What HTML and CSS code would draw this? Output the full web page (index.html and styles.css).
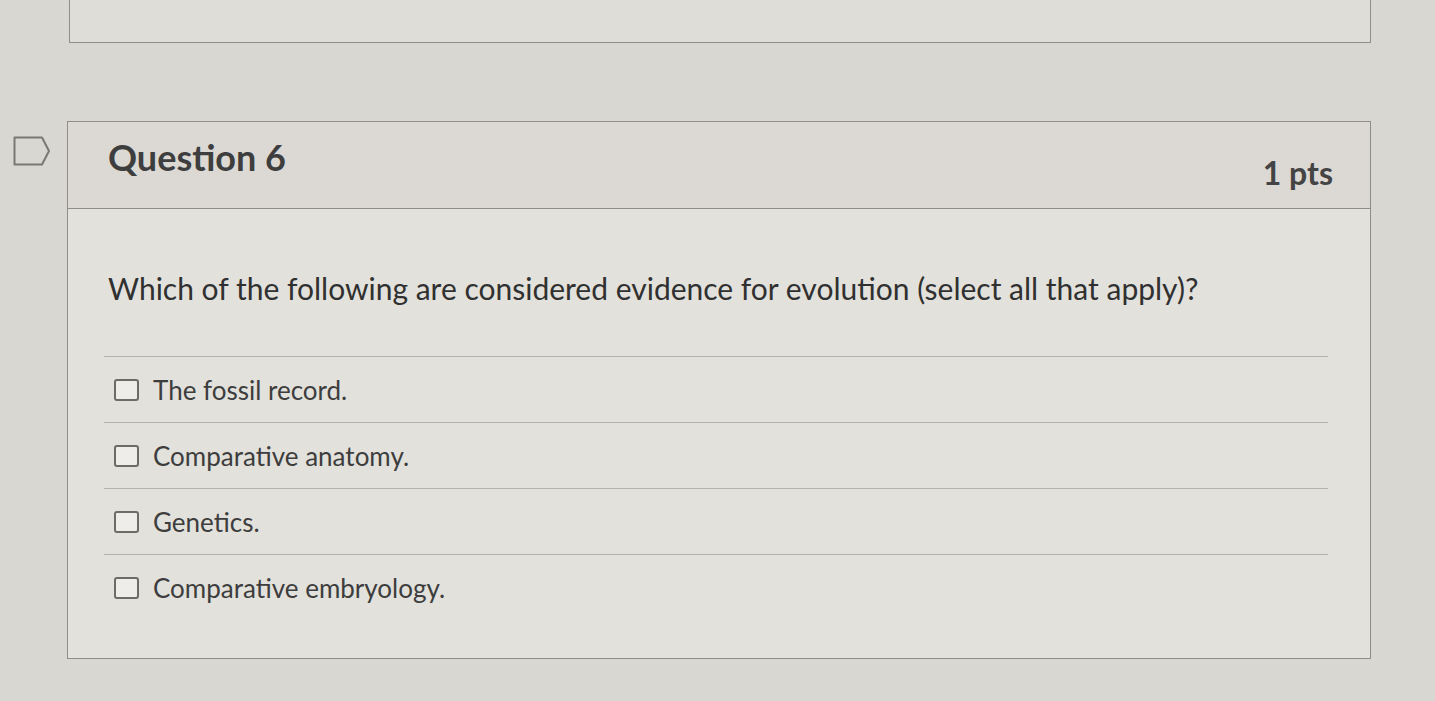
FILE: index.html
```html
<!DOCTYPE html>
<html lang="en">
<head>
<meta charset="utf-8">
<title>Question 6</title>
<link rel="stylesheet" href="styles.css">
</head>
<body>
<div class="page">
  <div class="prev-card"></div>
  <div class="question">
    <div class="flag-col">
      <svg class="flag" width="38" height="30" viewBox="0 0 38 30" aria-hidden="true">
        <path d="M1.5 1.5 H29 L36 15 L29 28.5 H1.5 Z" fill="none" stroke="#7a7874" stroke-width="2" stroke-linejoin="round"/>
      </svg>
    </div>
    <div class="card">
      <div class="card-header">
        <h2 class="title">Question 6</h2>
        <div class="pts">1 pts</div>
      </div>
      <div class="card-body">
        <p class="prompt">Which of the following are considered evidence for evolution (select all that apply)?</p>
        <div class="answers">
          <label class="answer"><span class="box"></span><span>The fossil record.</span></label>
          <label class="answer"><span class="box"></span><span>Comparative anatomy.</span></label>
          <label class="answer"><span class="box"></span><span>Genetics.</span></label>
          <label class="answer"><span class="box"></span><span>Comparative embryology.</span></label>
        </div>
      </div>
    </div>
  </div>
</div>
</body>
</html>
```

FILE: styles.css
```css
html, body {
  margin: 0;
  padding: 0;
}
body {
  background: #d9d7d2;
  font-family: Lato, "Open Sans", "Liberation Sans", sans-serif;
  color: #3b3b3b;
  width: 1435px;
  height: 701px;
  overflow: hidden;
}
.page {
  padding-right: 64px;
}
.prev-card {
  margin-left: 69px;
  height: 42px;
  border: 1px solid #8f8d89;
  border-top: 0;
  background: #dfddd8;
}
.question {
  display: flex;
  margin-top: 78px;
}
.flag-col {
  width: 54px;
  padding-left: 13px;
  padding-top: 15px;
  flex: none;
}
.flag {
  display: block;
}
.card {
  flex: 1;
  border: 1px solid #8f8d89;
  background: #e2e1dc;
}
.card-header {
  height: 86px;
  display: flex;
  align-items: center;
  justify-content: space-between;
  padding: 0 37px 0 40px;
  background: #dcd9d4;
  border-bottom: 1px solid #8f8d89;
}
.title {
  margin: 0;
  font-size: 36px;
  font-weight: 700;
  color: #3e3e3e;
  margin-top: -16px;
}
.pts {
  font-size: 32px;
  font-weight: 700;
  color: #444;
  margin-top: 14px;
}
.card-body {
  padding: 62px 42px 38px 36px;
}
.prompt {
  margin: 0 0 0 4px;
  font-size: 30px;
  line-height: 34px;
  color: #303030;
}
.answers {
  margin-top: 51px;
  border-top: 1px solid #b3b1ac;
}
.answer {
  display: flex;
  align-items: center;
  gap: 14px;
  height: 65px;
  padding-left: 10px;
  border-bottom: 1px solid #b3b1ac;
  font-size: 26px;
  color: #3d3d3d;
}
.answer:last-child {
  border-bottom: 0;
}
.box {
  width: 21px;
  height: 18px;
  border: 2px solid #6d6b68;
  border-radius: 3px;
  background: #eeede9;
  flex: none;
}
```
